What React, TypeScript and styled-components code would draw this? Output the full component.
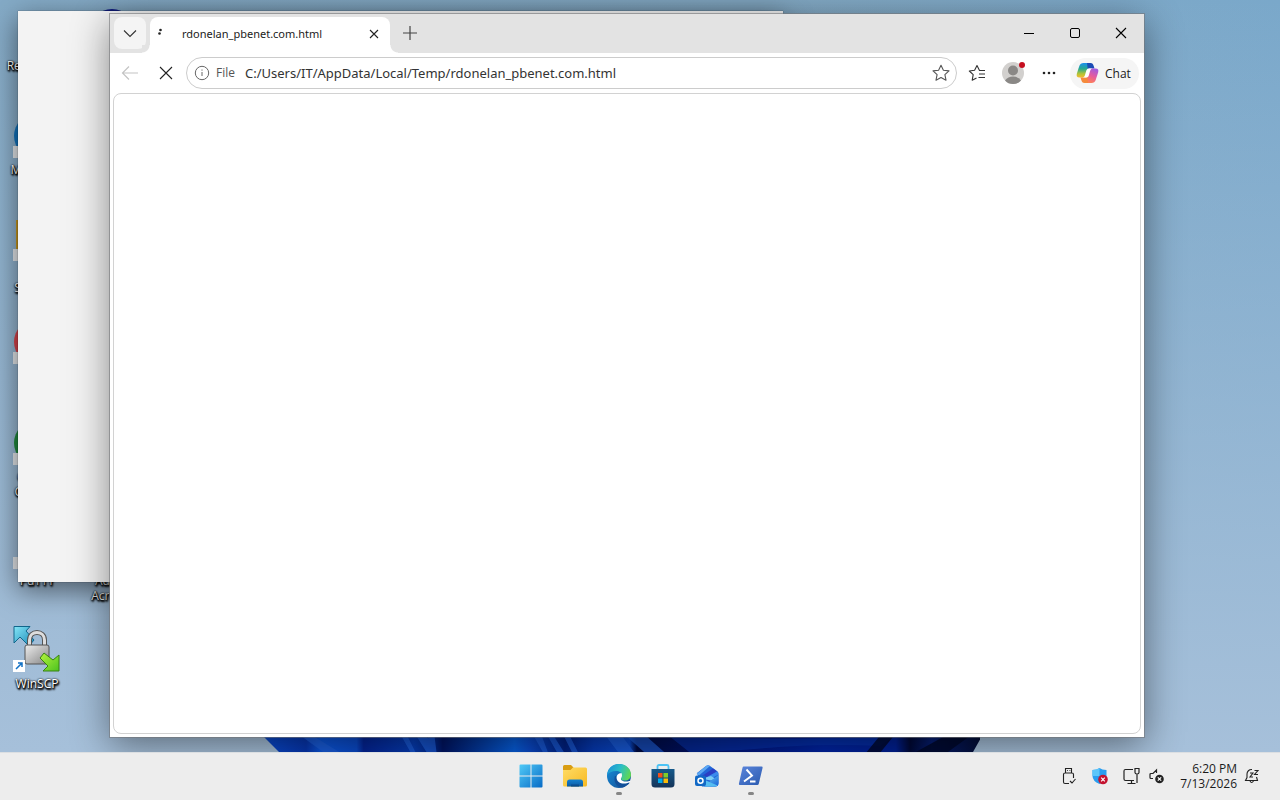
import React from 'react';
import styled, { createGlobalStyle, css } from 'styled-components';

const Global = createGlobalStyle`
  *, *::before, *::after { box-sizing: border-box; }
  body { margin: 0; font-family: "Open Sans", "Noto Sans", sans-serif; color: #1b1b1b; overflow: hidden; }
  button { font: inherit; color: inherit; border: 0; padding: 0; background: none; }
  svg { display: block; }
`;

const Screen = styled.div`
  display: flex;
  flex-direction: column;
  height: 100vh;
`;

const Wallpaper = styled.main`
  position: relative;
  flex: 1;
  min-height: 0;
  overflow: hidden;
  background:
    linear-gradient(180deg, #a6c0da00 0%, #a6c0da 100%),
    linear-gradient(90deg, #84aac6 0%, #83a9c4 60%, #7aa8ca 100%);
`;

const Bloom = styled.svg`
  position: absolute;
  left: 263px;
  right: 300px;
  bottom: 0;
  width: calc(100% - 563px);
  height: 16px;
`;

const Shortcut = styled.div<{ $x: number; $y: number }>`
  position: absolute;
  left: ${p => p.$x}px;
  top: ${p => p.$y}px;
  width: 74px;
  display: flex;
  flex-direction: column;
  align-items: center;
`;

const ShortcutArt = styled.div`
  position: relative;
  width: 48px;
  height: 48px;
`;

const Badge = styled.span`
  position: absolute;
  left: 0;
  bottom: 2px;
  width: 12px;
  height: 12px;
  background: #e4e7ea;
`;

const ShortcutName = styled.span`
  margin-top: 2px;
  font-size: 12px;
  line-height: 15px;
  text-align: center;
  color: #fff;
  text-shadow: 0 1px 2px #000, 1px 1px 2px #000, 1px 2px 2px #000, 0 0 2px #000;
`;

const NameLine = styled.span`
  display: block;
  min-height: 15px;
`;

const BackWindow = styled.section`
  position: absolute;
  left: 18px;
  top: 11px;
  width: 765px;
  height: 571px;
  background: #f3f3f3;
  box-shadow: 0 0 1px #0008, 0 8px 26px #0008;
`;

const BrowserWindow = styled.section`
  position: absolute;
  left: 110px;
  top: 14px;
  right: 136px;
  bottom: 15px;
  display: flex;
  flex-direction: column;
  background: #fff;
  box-shadow: 0 0 0 1px #75777a99, 0 8px 36px #0007;
`;

const TabStrip = styled.header`
  display: flex;
  align-items: flex-start;
  height: 39px;
  padding: 3px 0 0 4px;
  background: #e3e3e3;
`;

const center = css`
  display: flex;
  align-items: center;
  justify-content: center;
`;

const TabMenuButton = styled.button`
  ${center}
  width: 32px;
  height: 32px;
  border-radius: 8px;
  background: #f4f4f4;
`;

const Tab = styled.div`
  position: relative;
  display: flex;
  align-items: center;
  width: 240px;
  height: 36px;
  margin-left: 4px;
  padding: 0 4px 3px 4px;
  border-radius: 8px 8px 0 0;
  background: #fff;
  &::before, &::after {
    content: "";
    position: absolute;
    bottom: 0;
    width: 8px;
    height: 8px;
  }
  &::before { left: -8px; background: radial-gradient(circle at 0 0, #e3e3e3 7px, #fff 8px); }
  &::after { right: -8px; background: radial-gradient(circle at 100% 0, #e3e3e3 7px, #fff 8px); }
`;

const TabTitle = styled.span`
  flex: 1;
  margin-left: 12px;
  font-family: "Noto Sans", sans-serif;
  font-size: 11px;
  line-height: 16px;
`;

const TabButton = styled.button`
  ${center}
  width: 24px;
  height: 24px;
`;

const NewTabButton = styled.button`
  ${center}
  width: 32px;
  height: 32px;
  margin-left: 4px;
`;

const WindowControls = styled.div`
  display: flex;
  margin-left: auto;
`;

const WindowButton = styled.button`
  ${center}
  width: 46px;
  height: 32px;
`;

const Toolbar = styled.nav`
  display: flex;
  align-items: center;
  height: 40px;
  padding: 0 5px 0 2px;
`;

const ToolButton = styled.button`
  ${center}
  position: relative;
  width: 36px;
  height: 32px;
`;

const AddressBar = styled.form`
  display: flex;
  align-items: center;
  flex: 1;
  height: 32px;
  margin: 0 2px;
  padding: 0 6px 0 7px;
  border: 1px solid #ccc;
  border-radius: 16px;
`;

const Scheme = styled.label`
  margin: 0 10px 0 6px;
  font-size: 12px;
  line-height: 16px;
  color: #555;
`;

const AddressInput = styled.input`
  flex: 1;
  min-width: 0;
  padding: 0;
  border: 0;
  outline: 0;
  background: none;
  font-family: "Noto Sans", sans-serif;
  font-size: 13px;
  line-height: 20px;
  color: #333;
`;

const NotifyDot = styled.span`
  position: absolute;
  right: 6px;
  top: 5px;
  width: 6px;
  height: 6px;
  border-radius: 50%;
  background: #c50f1f;
`;

const ChatButton = styled.button`
  display: flex;
  align-items: center;
  gap: 6px;
  width: 69px;
  height: 31px;
  margin-left: 3px;
  padding: 0 6px;
  border-radius: 16px;
  background: #f5f5f5;
  font-size: 12px;
`;

const PageView = styled.div`
  flex: 1;
  margin: 0 3px 3px;
  border: 1px solid #d2d2d2;
  border-radius: 8px;
  background: #fff;
`;

const Taskbar = styled.footer`
  display: grid;
  grid-template-columns: 1fr auto 1fr;
  align-items: center;
  height: 48px;
  background: #ededed;
  box-shadow: inset 0 1px 0 #dcdfe2;
`;

const TaskApps = styled.div`
  grid-column: 2;
  display: flex;
  padding-left: 1px;
`;

const TaskButton = styled.button<{ $running?: boolean }>`
  ${center}
  position: relative;
  width: 44px;
  height: 48px;
  &::after {
    content: "";
    display: ${p => (p.$running ? 'block' : 'none')};
    position: absolute;
    bottom: 5px;
    width: 6px;
    height: 3px;
    border-radius: 2px;
    background: #868686;
  }
`;

const Tray = styled.div`
  display: flex;
  align-items: center;
  justify-content: flex-end;
  padding-right: 20px;
`;

const TrayButton = styled.button<{ $gap: number }>`
  margin-right: ${p => p.$gap}px;
`;

const Clock = styled.button`
  margin-right: 7px;
  font-size: 12px;
  line-height: 15px;
  text-align: right;
`;

const ClockLine = styled.span`
  display: block;
`;

const CrossIcon = ({ size, color = '#222' }: { size: number; color?: string }) => (
  <svg width={size} height={size} viewBox={`0 0 ${size} ${size}`} stroke={color} strokeWidth="1.1" fill="none">
    <path d={`M1 1 ${size - 1} ${size - 1}M${size - 1} 1 1 ${size - 1}`} />
  </svg>
);

const STAR = 'M9 1.2l2.400 5 5.600.7-4.100 3.800 1.100 5.500L9 13.500l-5 2.700 1.100-5.500L1 6.900l5.600-.7z';

const CopilotLogo = () => (
  <svg width="23" height="22" viewBox="0 0 23 22">
    <defs>
      <linearGradient id="cpA" x1="0" y1="0" x2="0" y2="1">
        <stop offset="0" stopColor="#1b8fee" /><stop offset=".4" stopColor="#27a98f" />
        <stop offset=".75" stopColor="#b5c435" /><stop offset="1" stopColor="#f5b82e" />
      </linearGradient>
      <linearGradient id="cpB" x1=".7" y1="0" x2=".3" y2="1">
        <stop offset="0" stopColor="#a05be0" /><stop offset=".5" stopColor="#e65c9c" />
        <stop offset="1" stopColor="#ff8351" />
      </linearGradient>
    </defs>
    <path d="M7.500 1H14L9.500 15.500H3.500C.8 15.500.2 14 .9 11.500l2.400-7.500C4 2 5.400 1 7.500 1z" fill="url(#cpA)" />
    <path d="M11 1h3.500c2 0 2.600 1 3.200 3l.8 2.600h-4.500c-1 0-1.800.5-2.200 1.500z" fill="#1b4cb5" />
    <path d="M15.500 21H9l4.500-14.500h6c2.700 0 3.300 1.500 2.600 4l-2.400 7.500c-.7 2-2.100 3-4.200 3z" fill="url(#cpB)" />
    <path d="M12 21H8.500c-2 0-2.600-1-3.200-3l-.8-2.500H9c1 0 1.800-.5 2.200-1.600z" fill="#f58a3c" />
    <path d="M13 6.500h3c-1.200.6-1.700 1.700-2 2.700l-1.200 4.300c-.5 1.500-1.400 2-2.800 2H7c1.200-.6 1.700-1.600 2-2.600l1.300-4.300C10.800 7.100 11.600 6.500 13 6.500z" fill="#fff" />
  </svg>
);

const WindowsLogo = () => (
  <svg width="24" height="24" viewBox="0 0 24 24">
    <defs>
      <linearGradient id="win" gradientUnits="userSpaceOnUse" x1="0" y1="0" x2="24" y2="24">
        <stop stopColor="#52ccf8" /><stop offset="1" stopColor="#0669c5" />
      </linearGradient>
    </defs>
    <path fill="url(#win)" d="M.5 1.500q0-1 1-1h10v11H.5zM12.500.5h10q1 0 1 1v10h-11zM.5 12.500h11v11h-10q-1 0-1-1zM12.500 12.500h11v10q0 1-1 1h-10z" />
  </svg>
);

const FolderIcon = () => (
  <svg width="26" height="24" viewBox="0 0 26 24">
    <defs><linearGradient id="fold" x1="0" y1="0" x2="1" y2="1"><stop stopColor="#ffdc65" /><stop offset="1" stopColor="#f7b923" /></linearGradient>
      <linearGradient id="foldB" x1="0" y1="0" x2="0" y2="1"><stop stopColor="#1682d0" /><stop offset="1" stopColor="#0d5ca4" /></linearGradient></defs>
    <path fill="#d99d12" d="M1 2.500Q1 1 2.500 1H9l2.500 2.500L9 7H1z" />
    <path fill="url(#fold)" d="M1 6h7.500L11 3.500h12.500q1.500 0 1.500 1.500v16q0 1.500-1.500 1.500h-21Q1 22.500 1 21z" />
    <path fill="url(#foldB)" d="M5 18q0-2.500 2.500-2.500h11Q21 15.500 21 18v4.500H5z" />
    <path fill="#0c4e8f" d="M9 20.500h8v2H9z" />
  </svg>
);

const EdgeIcon = () => (
  <svg width="26" height="26" viewBox="0 0 26 26">
    <defs>
      <linearGradient id="edTop" x1="0" y1=".3" x2="1" y2=".6"><stop stopColor="#1b91d8" /><stop offset=".5" stopColor="#2abdc6" /><stop offset="1" stopColor="#62d94f" /></linearGradient>
      <linearGradient id="edLow" x1="0" y1="0" x2="1" y2="1"><stop stopColor="#1690dc" /><stop offset="1" stopColor="#124990" /></linearGradient>
    </defs>
    <circle cx="13" cy="13" r="12" fill="url(#edLow)" />
    <path fill="url(#edTop)" d="M1 12C1.500 5.500 6.500 1 13 1c7 0 12 5 12 10.500 0 4-3 6-6 6-2.500 0-4-.8-4-1.800 0-.8 1-1.200 1-3C16 10 13.500 8 10 8c-4 0-7.500 2-9 4z" />
    <path fill="#124f99" d="M9 13c-2 6 2 11.500 7.500 11.500 3-.8 5.800-2.600 7.300-5C16 22.500 10 19 10.500 13z" />
    <path fill="#fff" d="M15.800 10.300c-2.800-.6-5.400 1.600-5.200 4.600.3 4.500 6 7.300 13.200 4.300.5-.2.700-.6.300-1-.4-.3-1-.1-1.600.1-3 .9-7.600-.3-7.600-2.600 0-.8 1.100-1.200 1.100-3 0-1-.2-1.700-.2-2.400z" />
  </svg>
);

const StoreIcon = () => (
  <svg width="24" height="26" viewBox="0 0 24 26">
    <defs><linearGradient id="store" x1="0" y1="0" x2="0" y2="1"><stop stopColor="#165a8b" /><stop offset="1" stopColor="#153459" /></linearGradient></defs>
    <path d="M6.500 6V3.500q0-1.500 1.500-1.500h8q1.500 0 1.500 1.500V6" fill="none" stroke="#4dc3f5" strokeWidth="1.800" />
    <path d="M.5 6h23v15q0 3.500-3.500 3.500H4Q.5 24.500.5 21z" fill="url(#store)" />
    <path fill="#f1511b" d="M7 10h4.500v4.500H7z" /><path fill="#80cc28" d="M12.500 10H17v4.500h-4.500z" />
    <path fill="#00adef" d="M7 15.500h4.500V20H7z" /><path fill="#fbbc09" d="M12.500 15.500H17V20h-4.500z" />
  </svg>
);

const OutlookIcon = () => (
  <svg width="26" height="26" viewBox="0 0 26 26">
    <defs><linearGradient id="olA" x1="0" y1="0" x2="1" y2="1"><stop stopColor="#6fd0f5" /><stop offset="1" stopColor="#1661d8" /></linearGradient></defs>
    <path fill="#2367d8" d="M3 10 12 3q2-1.500 4 0l7 5q1.500 1 1.500 3v9q0 3.500-3.500 3.500H8z" />
    <path fill="#5ba7f2" d="M2.500 11 12 3q2-1.500 4 0L5 12.500z" />
    <path fill="#2b3fc4" d="M8 13 19 5.500l4 3L13 15z" />
    <path fill="#3b8bec" d="M12 14.500 23 8.500q1.500 1 1.500 3L14 17z" />
    <path fill="#7ccdf5" d="M12 14.500l5-1.500 4 2.500-4 2-5-1z" />
    <path fill="url(#olA)" d="M10 23 24.500 12v8q0 3.500-3.500 3.500H10z" />
    <path fill="#55bdf1" d="M12 17.500 23.500 22.500q-1 1-3 1H11z" />
    <rect x="1" y="12.500" width="11" height="10.500" rx="2" fill="#1269c5" />
    <circle cx="6.500" cy="17.700" r="2.500" fill="none" stroke="#fff" strokeWidth="1.500" />
  </svg>
);

const PowerShellIcon = () => (
  <svg width="26" height="22" viewBox="0 0 26 22">
    <defs><linearGradient id="ps" x1="0" y1="0" x2="1" y2="1"><stop stopColor="#5c86dc" /><stop offset="1" stopColor="#2a5aaf" /></linearGradient></defs>
    <path fill="url(#ps)" d="M5.500 1.500h18q1.400 0 1.100 1.300l-3.800 16q-.3 1.200-1.500 1.200H2Q.6 20 .9 18.700l3.600-16q.3-1.200 1-1.200z" />
    <path d="M8.500 4.500l5.500 6-8 6M12 16.500h5.500" fill="none" stroke="#fff" strokeWidth="1.900" />
  </svg>
);

const WinScpArt = () => (
  <svg width="48" height="48" viewBox="0 0 48 48">
    <defs>
      <linearGradient id="lock" x1="0" y1="0" x2="1" y2="1"><stop stopColor="#ededed" /><stop offset="1" stopColor="#858585" /></linearGradient>
      <linearGradient id="cyan" x1="0" y1="0" x2="1" y2="1"><stop stopColor="#85e6f7" /><stop offset="1" stopColor="#1685b5" /></linearGradient>
      <linearGradient id="lime" x1="0" y1="0" x2="1" y2="1"><stop stopColor="#b6f33d" /><stop offset="1" stopColor="#4cc31f" /></linearGradient>
    </defs>
    <path d="M1 .5h16l-4 4.500 8 9-5 6-9-9-6 6z" fill="url(#cyan)" stroke="#12678c" />
    <path d="M16.500 20v-6c0-10 15-10 15 0v6" fill="none" stroke="#555" strokeWidth="5" />
    <path d="M16.500 20v-6c0-10 15-10 15 0v6" fill="none" stroke="#ddd" strokeWidth="3" />
    <rect x="12" y="19" width="24" height="19" rx="2" fill="url(#lock)" stroke="#555" />
    <path d="M31 27l9 7 6-5v16H30l5-5-8-8z" fill="url(#lime)" stroke="#398214" />
    <path d="M0 34h12v12H0z" fill="#fff" /><path d="M3 43l6-6M5 37h4v4" fill="none" stroke="#1271c5" strokeWidth="1.500" />
  </svg>
);

const Disc = ({ color }: { color: string }) => (
  <svg width="48" height="48" viewBox="0 0 48 48"><circle cx="24" cy="24" r="23" fill={color} /></svg>
);

const Folder = () => (
  <svg width="48" height="48" viewBox="0 0 48 48"><path d="M3 5h42v32H3z" fill="#c99a20" /></svg>
);

type Item = { id: string; x: number; y: number; lines: string[]; art?: React.ReactNode; badge?: boolean };

const shortcuts: Item[] = [
  { id: 'bin', x: 1, y: 8, lines: ['Recycle Bin'] },
  { id: 'edge', x: 0, y: 112, lines: ['Microsoft', 'Edge'], art: <Disc color="#1273bd" />, badge: true },
  { id: 'shares', x: 0, y: 215, lines: ['', 'Services'], art: <Folder />, badge: true },
  { id: 'red', x: 0, y: 318, lines: [], art: <Disc color="#d8424a" />, badge: true },
  { id: 'chrome', x: 0, y: 419, lines: ['Google', 'Chrome'], art: <Disc color="#218b3d" />, badge: true },
  { id: 'putty', x: 0, y: 523, lines: ['PuTTY'], badge: true },
  { id: 'winscp', x: 0, y: 626, lines: ['WinSCP'], art: <WinScpArt /> },
  { id: 'blue', x: 75, y: 8, lines: [], art: <Disc color="#12208c" /> },
  { id: 'acrobat', x: 76, y: 523, lines: ['Adobe', 'Acrobat'] },
];

export default function App() {
  return (
    <Screen>
      <Global />
      <Wallpaper>
        <Bloom viewBox="0 0 715 16" preserveAspectRatio="none">
          <defs>
            <linearGradient id="petals">
              <stop offset="0" stopColor="#0a4bd0" /><stop offset=".06" stopColor="#0736b0" />
              <stop offset=".08" stopColor="#0c56dc" /><stop offset=".13" stopColor="#0a4aca" />
              <stop offset=".14" stopColor="#042496" /><stop offset=".21" stopColor="#063cb4" />
              <stop offset=".24" stopColor="#002484" /><stop offset=".25" stopColor="#001462" />
              <stop offset=".35" stopColor="#075edc" /><stop offset=".37" stopColor="#0a4aca" />
              <stop offset=".42" stopColor="#002080" /><stop offset=".46" stopColor="#063ab4" />
              <stop offset=".51" stopColor="#0a4aca" /><stop offset=".52" stopColor="#000b42" />
              <stop offset=".65" stopColor="#03157a" /><stop offset=".78" stopColor="#0024a4" />
              <stop offset=".88" stopColor="#002094" /><stop offset=".9" stopColor="#000937" />
              <stop offset=".93" stopColor="#061e73" /><stop offset="1" stopColor="#030d35" />
            </linearGradient>
          </defs>
          <path d="M0 0h717l-9 16H16z" fill="url(#petals)" />
          <path d="M38 0h12l26 16H60zM138 0h6l8 16h-5zM153 0h10l10 16h-10zM164 0h7l2 16h-4zM270 0h8l6 16h-5zM284 0h6l10 16h-7zM300 0h6l8 16h-6zM342 0h16l12 16h-16zM362 0h20l18 16h-20z" fill="#1e5fdc" opacity=".7" />
          <path d="M405 0c90 4 160 4 225 0l-15 10c-90-4-130 6-190 6z" fill="#0736b0" opacity=".6" />
          <path d="M615 0h14l-13 16h-14zM680 0h25l-22 16h-32z" fill="#000828" opacity=".8" />
        </Bloom>

        {shortcuts.map(s => (
          <Shortcut key={s.id} $x={s.x} $y={s.y}>
            <ShortcutArt>
              {s.art}
              {s.badge && <Badge />}
            </ShortcutArt>
            <ShortcutName>
              {s.lines.map((line, i) => <NameLine key={i}>{line}</NameLine>)}
            </ShortcutName>
          </Shortcut>
        ))}

        <BackWindow aria-label="Background window" />

        <BrowserWindow aria-label="Browser">
          <TabStrip>
            <TabMenuButton aria-label="Tab menu">
              <svg width="14" height="14" viewBox="0 0 14 14" fill="none" stroke="#333" strokeWidth="1.100"><path d="M1 4.500l6 6 6-6" /></svg>
            </TabMenuButton>
            <Tab>
              <svg width="16" height="16" viewBox="0 0 16 16" fill="#222"><circle cx="6.500" cy="4" r="1.300" /><circle cx="5.500" cy="7.500" r="1.300" /></svg>
              <TabTitle>rdonelan_pbenet.com.html</TabTitle>
              <TabButton aria-label="Close tab"><CrossIcon size={10} /></TabButton>
            </Tab>
            <NewTabButton aria-label="New tab">
              <svg width="16" height="16" viewBox="0 0 16 16" stroke="#444" strokeWidth="1.200"><path d="M8 1v14M1 8h14" /></svg>
            </NewTabButton>
            <WindowControls>
              <WindowButton aria-label="Minimize">
                <svg width="10" height="10" viewBox="0 0 10 10" stroke="#000"><path d="M0 5.500h10" /></svg>
              </WindowButton>
              <WindowButton aria-label="Maximize">
                <svg width="10" height="10" viewBox="0 0 10 10" stroke="#000" fill="none"><rect x=".5" y=".5" width="9" height="9" rx="1.500" /></svg>
              </WindowButton>
              <WindowButton aria-label="Close"><CrossIcon size={12} color="#000" /></WindowButton>
            </WindowControls>
          </TabStrip>

          <Toolbar>
            <ToolButton aria-label="Back">
              <svg width="18" height="16" viewBox="0 0 18 16" fill="none" stroke="#c4c4c4" strokeWidth="1.200"><path d="M17 8H1.500M8 1.500 1.500 8 8 14.500" /></svg>
            </ToolButton>
            <ToolButton aria-label="Stop loading"><CrossIcon size={14} /></ToolButton>
            <AddressBar onSubmit={e => e.preventDefault()}>
              <svg width="16" height="16" viewBox="0 0 16 16" fill="none" stroke="#666">
                <circle cx="8" cy="8" r="6.700" /><path d="M8 7v4" /><path d="M8 4.500v1.200" />
              </svg>
              <Scheme htmlFor="address">File</Scheme>
              <AddressInput id="address" defaultValue="C:/Users/IT/AppData/Local/Temp/rdonelan_pbenet.com.html" />
              <button type="button" aria-label="Add to favorites">
                <svg width="18" height="18" viewBox="0 0 18 18" fill="none" stroke="#555" strokeWidth="1.100" strokeLinejoin="round"><path d={STAR} /></svg>
              </button>
            </AddressBar>
            <ToolButton aria-label="Favorites">
              <svg width="18" height="18" viewBox="0 0 18 18" fill="none" stroke="#333" strokeWidth="1.100" strokeLinejoin="round">
                <path d="M17 6.500h-5.500L9 1.500 6.600 6.300 1.300 7l3.900 3.700-1 5.500L8.500 14M11 10H17M10.500 13.500H17" />
              </svg>
            </ToolButton>
            <ToolButton aria-label="Profile">
              <svg width="22" height="22" viewBox="0 0 22 22">
                <circle cx="11" cy="11" r="11" fill="#d2d0ce" /><circle cx="11" cy="8.500" r="5" fill="#8a8886" />
                <path d="M3 18.500q3-4 8-4t8 4Q16 22 11 22t-8-3.500z" fill="#8a8886" />
              </svg>
              <NotifyDot />
            </ToolButton>
            <ToolButton aria-label="Settings and more">
              <svg width="14" height="4" viewBox="0 0 14 4" fill="#222"><circle cx="2" cy="2" r="1.300" /><circle cx="7" cy="2" r="1.300" /><circle cx="12" cy="2" r="1.300" /></svg>
            </ToolButton>
            <ChatButton><CopilotLogo />Chat</ChatButton>
          </Toolbar>
          <PageView />
        </BrowserWindow>
      </Wallpaper>

      <Taskbar>
        <TaskApps>
          <TaskButton aria-label="Start"><WindowsLogo /></TaskButton>
          <TaskButton aria-label="File Explorer"><FolderIcon /></TaskButton>
          <TaskButton aria-label="Edge" $running><EdgeIcon /></TaskButton>
          <TaskButton aria-label="Store"><StoreIcon /></TaskButton>
          <TaskButton aria-label="Outlook"><OutlookIcon /></TaskButton>
          <TaskButton aria-label="PowerShell" $running><PowerShellIcon /></TaskButton>
        </TaskApps>
        <Tray>
          <TrayButton aria-label="Eject hardware" $gap={16}>
            <svg width="14" height="18" viewBox="0 0 14 18" fill="none" stroke="#222" strokeWidth="1.100">
              <path d="M3.500 6V1.500h6V6M7 16.500H3q-1.500 0-1.500-1.500V7.500Q1.500 6 3 6h7q1.500 0 1.500 1.500V11M8 14l2 2 3.500-4M5.200 3.500h.8M7.500 3.500h.8" />
            </svg>
          </TrayButton>
          <TrayButton aria-label="Windows Security" $gap={15}>
            <svg width="16" height="18" viewBox="0 0 16 18">
              <path d="M7.500 1Q10 3 14.500 3v6q0 5-7 8-7-3-7-8V3Q5 3 7.500 1z" fill="#2a9df0" /><path d="M7.500 1Q5 3 .5 3v6h7z" fill="#5cc6fa" />
              <circle cx="11" cy="12.500" r="4.800" fill="#c4122f" /><path d="M9.200 10.700l3.600 3.600M12.800 10.700l-3.600 3.600" stroke="#fff" strokeWidth="1.200" />
            </svg>
          </TrayButton>
          <TrayButton aria-label="Network" $gap={9}>
            <svg width="17" height="18" viewBox="0 0 17 18" fill="none" stroke="#222" strokeWidth="1.200">
              <path d="M10 2.500H2.500Q1 2.500 1 4v8q0 1.500 1.500 1.500H11M4.500 16.500h8M8.500 13.500v3M12 1.500h4v4q0 1.500-2 1.500t-2-1.500zM14 7v9" />
            </svg>
          </TrayButton>
          <TrayButton aria-label="Volume muted" $gap={15}>
            <svg width="16" height="18" viewBox="0 0 16 18" fill="none" stroke="#222" strokeWidth="1.200">
              <path d="M7.500 6V3L4 6.500H2q-1 0-1 1v3q0 1 1 1h2" /><circle cx="10.500" cy="12" r="4.300" fill="#222" stroke="none" />
              <path d="M8.800 10.300l3.400 3.400M12.200 10.300l-3.400 3.400" stroke="#fff" strokeWidth="1.200" />
            </svg>
          </TrayButton>
          <Clock aria-label="Clock"><ClockLine>6:20 PM</ClockLine><ClockLine>7/13/2026</ClockLine></Clock>
          <button aria-label="Notifications">
            <svg width="16" height="16" viewBox="0 0 16 16" fill="none" stroke="#222" strokeWidth="1.100">
              <path d="M8 1.500C5 1.300 3 3.500 3 6v3.500l-1.500 3h12L12.500 9M6 13q1.500 3 3.500 0M6 5h3L6 9h3M10.500 2.500h3.500l-3.500 4H14" />
            </svg>
          </button>
        </Tray>
      </Taskbar>
    </Screen>
  );
}
